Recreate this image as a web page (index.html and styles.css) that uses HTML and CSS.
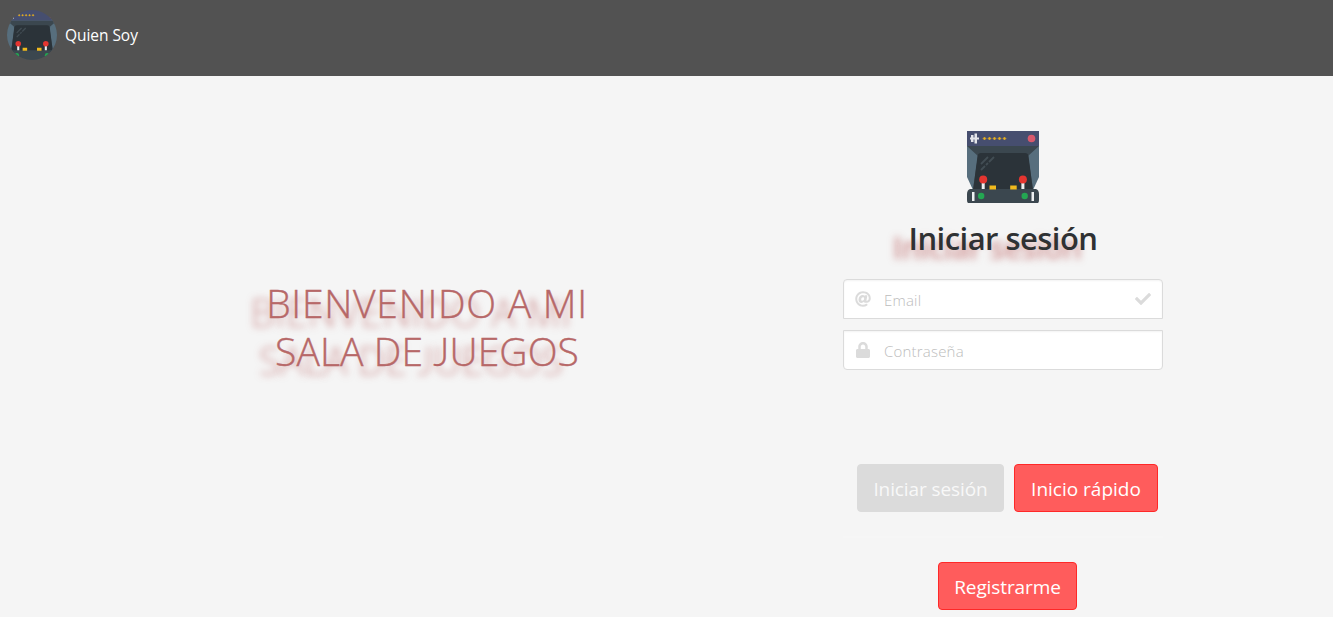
FILE: index.html
```html
<!DOCTYPE html>
<html lang="es">
<head>
<meta charset="utf-8">
<title>Sala de juegos</title>
<link rel="stylesheet" href="styles.css">
</head>
<body>
<svg class="defs" aria-hidden="true">
  <symbol id="arcade" viewBox="0 0 72 72">
    <path fill="#576e7d" d="M0 13h72v33L66 59H6L0 46z"/>
    <path fill="#3b474f" d="M0 15h72L61 25l5 33H6l5-33z"/>
    <path fill="#2b3339" d="M14 22h44q3 0 3.500 3L66 60H6l4.500-35q.5-3 3.500-3z"/>
    <path fill="#464e6f" d="M0 0h72v15H0z"/>
    <path fill="#e4e5ea" d="M4 4h2.500v2.500H7.500V2.500h2.500v4h2v2h-2v4H7.500v-4H6.500V11H4V8.500H3v-2h1z"/>
    <path fill="#e8b020" d="M17.500 6l1.500 1.500L17.500 9 16 7.500zm5 0L24 7.500 22.500 9 21 7.500zm5 0L29 7.500 27.500 9 26 7.500zm5 0L34 7.500 32.500 9 31 7.500zm5 0L39 7.500 37.500 9 36 7.500z" stroke="#e8b020" stroke-width=".5"/>
    <circle cx="64.500" cy="7.500" r="3.800" fill="#d9596c"/>
    <path stroke="#424d54" stroke-width="1.800" d="M14 33l7-7M14 39l4-4M19 34l2-2M22 31l5-5"/>
    <path fill="#3b474f" d="M3 58h66q3 1 3 5v6q0 3-1 3H1q-1 0-1-3v-6q0-4 3-5z"/>
    <path fill="#edf0f2" d="M14.700 51h3v7h-3zm39.700 0h3v7h-3zM5 61h2.500v9H5zm59.500 0H67v9h-2.500z"/>
    <circle cx="16.200" cy="48.500" r="4" fill="#e43530"/>
    <circle cx="55.900" cy="48.500" r="4" fill="#e43530"/>
    <path fill="#f0b91d" d="M22.500 54.500h6.500v4h-6.500zm20.700 0h6.500v4h-6.500z"/>
    <circle cx="14.200" cy="65" r="3.200" fill="#24a652"/>
    <circle cx="57.700" cy="65" r="3.200" fill="#24a652"/>
  </symbol>
</svg>
<header class="navbar">
  <svg class="avatar"><use href="#arcade"/></svg>
  <a class="nav-link">Quien Soy</a>
</header>
<main class="layout">
  <section class="welcome">
    <h1 class="welcome-title"><span class="line-one">BIENVENIDO A MI</span><br><span class="line-two">SALA DE <span class="short-j">J</span>UEGOS</span></h1>
  </section>
  <section class="login">
    <svg class="logo"><use href="#arcade"/></svg>
    <h2 class="login-title">Iniciar sesión</h2>
    <form class="fields">
      <div class="field field-top">
        <svg class="icon" viewBox="0 0 512 512"><path d="M256 8C118.941 8 8 118.919 8 256c0 137.059 110.919 248 248 248 48.154 0 95.342-14.140 135.408-40.223 12.005-7.815 14.625-24.288 5.552-35.372l-10.177-12.433c-7.671-9.371-21.179-11.667-31.373-5.129C325.920 429.757 291.314 440 256 440c-101.458 0-184-82.542-184-184S154.542 72 256 72c100.139 0 184 57.619 184 160 0 38.786-21.093 79.742-58.170 83.693-17.349-.454-16.910-12.857-13.476-30.024l23.433-121.110C394.750 149.750 383.308 136 368.225 136h-44.981a13.518 13.518 0 0 0-13.432 11.993l-.01.092c-14.697-17.901-40.448-21.775-59.971-21.775-74.580 0-137.831 62.234-137.831 151.460 0 65.303 36.785 105.870 96 105.870 26.984 0 57.369-15.637 74.991-38.333 9.522 34.104 40.613 34.104 70.725 34.104C462.609 379.410 504 307.798 504 232 504 95.653 394.023 8 256 8zm-21.680 304.430c-22.249 0-36.070-15.623-36.070-40.771 0-44.993 30.779-72.729 58.630-72.729 22.292 0 35.601 15.241 35.601 40.770 0 45.061-33.875 72.730-58.161 72.730z"/></svg>
        <span class="placeholder email">Email</span>
        <svg class="icon check" viewBox="0 0 512 512"><path d="M173.898 439.404l-166.400-166.400c-9.997-9.997-9.997-26.206 0-36.204l36.203-36.204c9.997-9.998 26.207-9.998 36.204 0L192 312.690 432.095 72.596c9.997-9.997 26.207-9.997 36.204 0l36.203 36.204c9.997 9.997 9.997 26.206 0 36.204l-294.400 294.401c-9.998 9.997-26.207 9.997-36.204-.001z"/></svg>
      </div>
      <div class="field field-bottom">
        <svg class="icon" viewBox="-32 0 512 512"><path d="M400 224h-24v-72C376 68.200 307.800 0 224 0S72 68.200 72 152v72H48c-26.500 0-48 21.500-48 48v192c0 26.500 21.500 48 48 48h352c26.500 0 48-21.500 48-48V272c0-26.500-21.500-48-48-48zm-104 0H152v-72c0-39.700 32.300-72 72-72s72 32.300 72 72v72z"/></svg>
        <span class="placeholder password">Contraseña</span>
      </div>
    </form>
    <div class="actions">
      <button class="button disabled"><span>Iniciar sesión</span></button>
      <button class="button quick"><span>Inicio rápido</span></button>
    </div>
    <hr class="divider">
    <button class="button register"><span>Registrarme</span></button>
  </section>
</main>
</body>
</html>
```
FILE: styles.css
```css
* { box-sizing: border-box; }
body {
  margin: 0;
  height: 617px;
  overflow: hidden;
  background: #f5f5f5;
  font-family: "Open Sans", "Noto Sans", sans-serif;
}
.defs { display: none; }
.navbar {
  display: flex;
  align-items: center;
  gap: 8px;
  height: 76px;
  padding: 0 7px 6px;
  background: #525252;
}
.avatar { width: 50px; height: 50px; border-radius: 50%; }
.nav-link { color: #fff; font-size: 15.5px; font-weight: 500; letter-spacing: -0.05px; white-space: nowrap; }
.layout {
  display: grid;
  grid-template-columns: 320px 320px;
  column-gap: 256px;
  padding-left: 267px;
}
.welcome { padding-top: 203px; }
.welcome-title {
  margin: 0 -10px;
  color: #b76868;
  font-size: 39px;
  font-weight: 350;
  line-height: 48px;
  text-align: center;
  white-space: nowrap;
  -webkit-text-stroke: 0.4px #b76868;
  text-shadow: -16px 9px 7px rgba(175, 70, 70, 0.55);
}
.line-one { letter-spacing: 0.75px; }
.line-two { letter-spacing: 0.1px; }
.short-j { font-family: Lato, "Open Sans", sans-serif; font-weight: 300; }
.login { display: flex; flex-direction: column; align-items: center; padding-top: 55px; }
.logo { width: 72px; height: 72px; }
.login-title {
  margin: 15px 0 0;
  height: 61px;
  color: #2f3133;
  font-size: 31px;
  font-weight: 550;
  letter-spacing: -0.55px;
  line-height: 40px;
  white-space: nowrap;
  text-shadow: -16px 9px 7px rgba(175, 60, 60, 0.5);
}
.fields { display: grid; gap: 11px; width: 320px; }
.field {
  display: flex;
  align-items: center;
  height: 40px;
  padding: 0 11px;
  border: 1px solid #dbdbdb;
  background: #fff;
  box-shadow: inset 0 1px 2px rgba(10, 10, 10, 0.05);
}
.field-top { border-radius: 4px 4px 0 0; }
.field-bottom { border-radius: 0 0 4px 4px; }
.icon { width: 16px; height: 16px; fill: #dbdbdb; }
.check { margin-left: auto; }
.placeholder { margin: 1px 0 0 13px; color: #bcbcbc; font-size: 15px; font-weight: 300; letter-spacing: 0.2px; line-height: 20px; }
.actions { display: flex; gap: 10px; margin: 94px 0 0 9px; }
.button {
  height: 48px;
  padding: 2px 0 0;
  border: 1px solid #ff2828;
  border-radius: 4px;
  background: #ff5c5c;
  color: #fff;
  font: 400 19px "Open Sans", "Noto Sans", sans-serif;
  letter-spacing: -0.1px;
  white-space: nowrap;
}
.disabled { width: 147px; border-color: #dbdbdb; background: #dbdbdb; color: #f8f8f8; }
.quick { width: 144px; letter-spacing: 0; }
.divider { width: 320px; height: 2px; margin: 24px 0; border: 0; background: #f6f6f6; }
.register { width: 139px; margin-left: 9px; }
```
